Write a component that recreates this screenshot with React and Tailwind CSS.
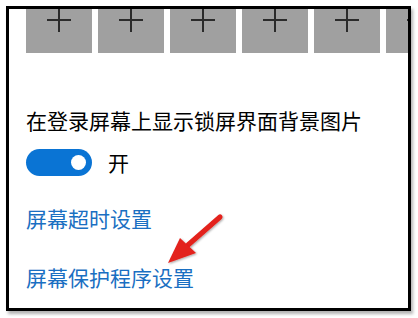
import React from "react";

function Tile() {
  return (
    <div className="w-[66px] h-[44px] shrink-0 bg-[#a0a0a0] flex justify-center overflow-hidden">
      <svg width="24" height="24" viewBox="0 0 24 24" className="-mt-px">
        <path d="M12 0v24M0 12h24" stroke="#2b2b2b" strokeWidth="2" />
      </svg>
    </div>
  );
}

export default function App() {
  return (
    <div className="w-[418px] h-[318px] bg-white p-[6px] font-['Microsoft_YaHei','Noto_Sans_CJK_SC',sans-serif]">
      <div className="relative w-[405px] h-[305px] border-[3px] border-black bg-white overflow-hidden shadow-[2px_3px_3px_rgba(0,0,0,0.3)]">
        {/* Tiles */}
        <div className="flex gap-[6px] pl-[17px]">
          {[0, 1, 2, 3, 4, 5].map((i) => (
            <Tile key={i} />
          ))}
        </div>

        {/* Lock screen background */}
        <div className="pl-[17px] mt-[53px] text-[21px] leading-[28px] text-black">
          在登录屏幕上显示锁屏界面背景图片
        </div>

        {/* Toggle */}
        <div className="flex items-center pl-[17px] mt-[14px]">
          <div className="w-[66px] h-[27px] rounded-full bg-[#0a74d4] flex items-center justify-end pr-[6px]">
            <div className="w-[15px] h-[15px] rounded-full bg-white" />
          </div>
          <span className="ml-[16px] text-[21px] leading-[28px] text-black">开</span>
        </div>

        {/* Links */}
        <div className="pl-[17px] mt-[28px] text-[21px] leading-[28px] text-[#1a6fc2]">屏幕超时设置</div>
        <div className="pl-[17px] mt-[31px] text-[21px] leading-[28px] text-[#1a6fc2]">屏幕保护程序设置</div>

        {/* Red annotation arrow */}
        <svg className="absolute left-[141px] top-[198px]" width="80" height="70" viewBox="0 0 80 70">
          <defs>
            <filter id="sh" x="-20%" y="-20%" width="140%" height="140%">
              <feDropShadow dx="1" dy="1" stdDeviation="1" floodColor="#000" floodOpacity="0.35" />
            </filter>
          </defs>
          <g filter="url(#sh)">
            <path d="M70 10 L38 38" stroke="#e3201b" strokeWidth="5" strokeLinecap="round" />
            <path d="M18 56 L30 31 L46 46 Z" fill="#e3201b" />
          </g>
        </svg>
      </div>
    </div>
  );
}
